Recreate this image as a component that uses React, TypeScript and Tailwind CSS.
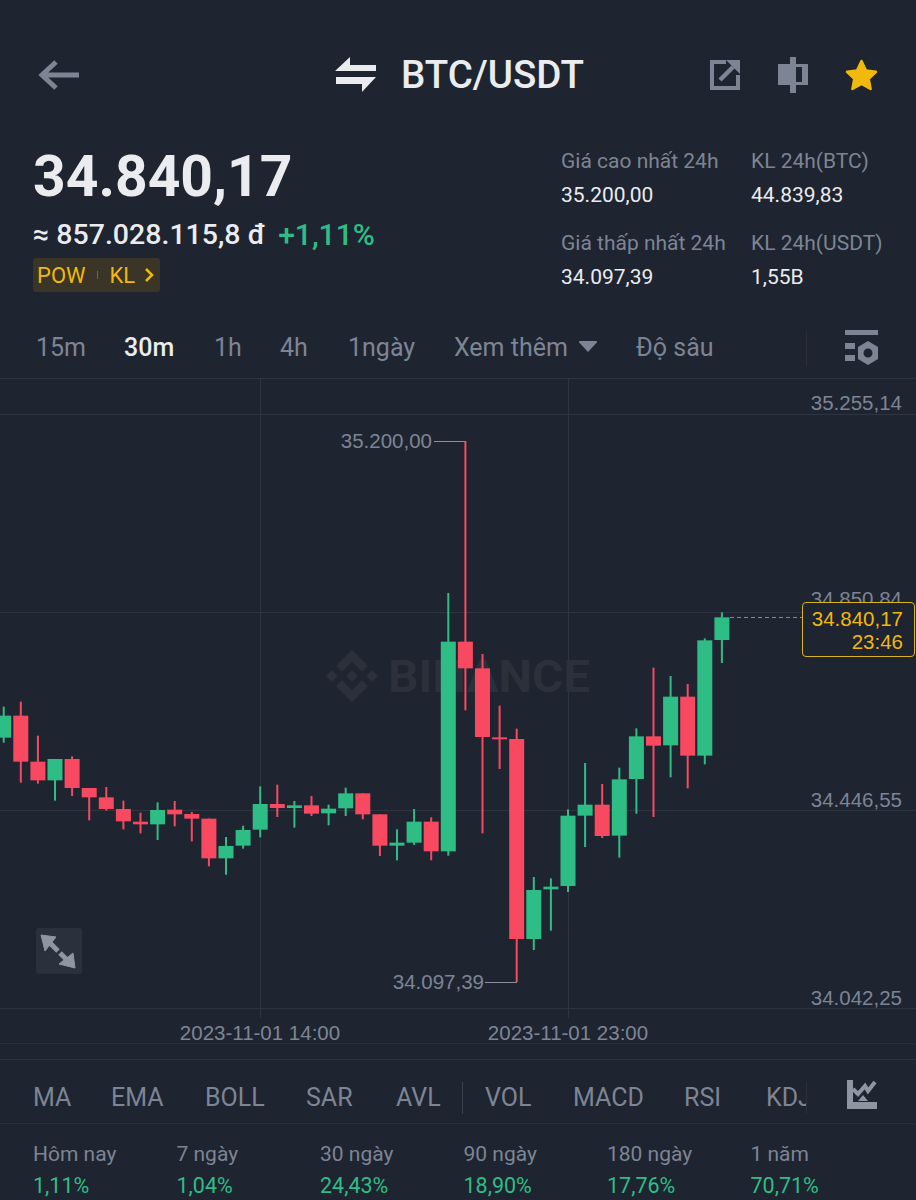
import React from "react";

const FONT = "font-['Roboto',sans-serif]";

// [up?, wickTop, bodyTop, bodyBottom, wickBottom], measured on a 3x grid from y=580
const candles: [boolean, number, number, number, number][] = [
  [true, 380, 407, 473, 488],
  [false, 365, 407, 545, 608],
  [false, 467, 545, 601, 611],
  [true, 537, 537, 601, 662],
  [false, 529, 537, 624, 648],
  [false, 624, 624, 652, 721],
  [false, 621, 652, 687, 692],
  [false, 662, 687, 724, 748],
  [false, 698, 725, 733, 760],
  [true, 667, 690, 733, 780],
  [false, 663, 689, 703, 739],
  [false, 696, 702, 716, 784],
  [false, 716, 716, 835, 859],
  [true, 771, 798, 835, 884],
  [true, 737, 750, 797, 806],
  [true, 619, 672, 749, 772],
  [false, 614, 672, 684, 711],
  [true, 663, 676, 684, 743],
  [false, 648, 676, 701, 708],
  [true, 674, 686, 700, 736],
  [true, 623, 640, 685, 708],
  [false, 640, 640, 703, 718],
  [false, 703, 703, 797, 828],
  [true, 748, 788, 797, 841],
  [true, 687, 725, 788, 795],
  [false, 712, 725, 814, 841],
  [true, 39, 185, 814, 827],
  [false, -417, 185, 265, 391],
  [false, 222, 265, 471, 760],
  [false, 377, 472, 478, 567],
  [false, 446, 477, 1077, 1206],
  [true, 891, 930, 1077, 1110],
  [true, 895, 920, 928, 1052],
  [true, 688, 707, 918, 936],
  [true, 549, 674, 707, 801],
  [false, 612, 674, 768, 774],
  [true, 563, 598, 767, 833],
  [true, 445, 469, 597, 701],
  [false, 263, 469, 497, 711],
  [true, 288, 350, 496, 592],
  [false, 312, 350, 527, 625],
  [true, 175, 181, 527, 553],
  [true, 97, 112, 180, 249],
];

// chart svg starts at y=378 on the page
const toY = (v: number) => 580 + v / 3 - 378;

const timeTabs = [
  { label: "15m", x: "w-[88px]" },
  { label: "30m", x: "w-[90px]", active: true },
  { label: "1h", x: "w-[66px]" },
  { label: "4h", x: "w-[68px]" },
  { label: "1ngày", x: "w-[106px]" },
];

const indicators = [
  { label: "MA", w: "w-[78px]" },
  { label: "EMA", w: "w-[94px]" },
  { label: "BOLL", w: "w-[101px]" },
  { label: "SAR", w: "w-[90px]" },
  { label: "AVL", w: "w-[66px]" },
];

const indicators2 = [
  { label: "VOL", w: "w-[88px]" },
  { label: "MACD", w: "w-[111px]" },
  { label: "RSI", w: "w-[82px]" },
  { label: "KDJ", w: "w-[40px]" },
];

const periods = [
  { label: "Hôm nay", value: "1,11%" },
  { label: "7 ngày", value: "1,04%" },
  { label: "30 ngày", value: "24,43%" },
  { label: "90 ngày", value: "18,90%" },
  { label: "180 ngày", value: "17,76%" },
  { label: "1 năm", value: "70,71%" },
];

function Chart() {
  const axis = "font-['Liberation_Sans',sans-serif] text-[20.5px] fill-[#7d8594]";
  return (
    <svg width="916" height="666" viewBox="0 0 916 666" className="block">
      {/* grid */}
      {[0, 36, 234, 432, 630].map((y) => (
        <line key={y} x1="0" x2="916" y1={y + 0.5} y2={y + 0.5} stroke="#2e3440" />
      ))}
      <line x1="260.5" x2="260.5" y1="0" y2="640" stroke="#2e3440" />
      <line x1="568.5" x2="568.5" y1="0" y2="640" stroke="#2e3440" />
      <line x1="0" x2="916" y1="665.5" y2="665.5" stroke="#2a2f3a" />

      {/* watermark */}
      <g transform="translate(326 272) scale(0.41)" fill="#2b303b">
        <path d="M38.73 53.2l24.59-24.58 24.6 24.6 14.3-14.31L63.32 0 24.43 38.89zM0 63.31l14.3-14.3 14.31 14.3-14.31 14.3zM38.73 73.41l24.59 24.59 24.6-24.6 14.31 14.29-38.9 38.91-38.91-38.88-.02-.02zM98 63.31l14.3-14.3 14.31 14.3-14.31 14.31zM77.83 63.3L63.32 48.78 52.59 59.51l-1.24 1.23-2.54 2.54 14.51 14.5 14.5-14.47z" />
      </g>
      <text x="388" y="314" textLength="202" lengthAdjust="spacingAndGlyphs" className="font-['Roboto',sans-serif] text-[45px] font-bold fill-[#2b303b]">
        BINANCE
      </text>

      {/* axis */}
      <text x="902" y="32" textAnchor="end" className={axis}>35.255,14</text>
      <text x="902" y="228" textAnchor="end" className={axis}>34.850,84</text>
      <text x="902" y="429" textAnchor="end" className={axis}>34.446,55</text>
      <text x="902" y="627" textAnchor="end" className={axis}>34.042,25</text>
      <text x="260" y="662" textAnchor="middle" className={axis}>2023-11-01 14:00</text>
      <text x="568" y="662" textAnchor="middle" className={axis}>2023-11-01 23:00</text>

      {/* candles */}
      {candles.map(([up, wt, bt, bb, wb], i) => {
        const cx = 3.7 + i * 17.1;
        const color = up ? "#2ebd85" : "#f84960";
        return (
          <g key={i} fill={color}>
            <rect x={cx - 1} y={toY(wt)} width="2" height={(wb - wt) / 3} />
            <rect x={cx - 7.5} y={toY(bt)} width="15" height={Math.max((bb - bt) / 3, 2)} />
          </g>
        );
      })}

      {/* high / low */}
      <text x="432" y="70" textAnchor="end" className={axis}>35.200,00</text>
      <line x1="434" x2="465" y1="63.5" y2="63.5" stroke="#8a909c" />
      <text x="484" y="611" textAnchor="end" className={axis}>34.097,39</text>
      <line x1="485" x2="517" y1="604.5" y2="604.5" stroke="#8a909c" />

      {/* last price line */}
      <line x1="730" x2="802" y1="239.5" y2="239.5" stroke="#a88a3a" strokeDasharray="4 3" />
    </svg>
  );
}

export default function App() {
  return (
    <div className={`w-[916px] h-[1200px] overflow-hidden bg-[#1e2430] ${FONT}`}>
      {/* nav */}
      <div className="flex items-center h-[50px] mt-[50px] px-[38px]">
        <div className="flex-1">
          <svg width="42" height="32" viewBox="0 0 42 32" fill="none" stroke="#7d8594" strokeWidth="5">
            <path d="M41 16H5M18 3 4 16l14 13" />
          </svg>
        </div>
        <div className="flex items-center gap-[24px] ml-[3px]">
          <svg width="42" height="36" viewBox="0 0 42 36" fill="#eaecef">
            <polygon points="0,14 15,0 15,8 41,8 41,14" />
            <polygon points="1,20 41,20 27,35 27,27 1,27" />
          </svg>
          <span className="text-[38.5px] leading-[50px] font-medium text-[#eaecef]">BTC/USDT</span>
        </div>
        <div className="flex-1 flex justify-end items-center gap-[37px]">
          <svg width="31" height="30" viewBox="0 0 31 30" fill="none" stroke="#7d8594" strokeWidth="4">
            <path d="M16 2H2v26h26V15" />
            <path d="M10 20 23 7" strokeWidth="4.5" />
            <polygon points="16,0 30,0 30,14" fill="#7d8594" stroke="none" />
          </svg>
          <svg width="30" height="36" viewBox="0 0 30 36" fill="#7d8594">
            <path d="M12 0h6v7h12v21H18v8h-6v-8H0V7h12zM18 10v15h6V10z" fillRule="evenodd" />
          </svg>
          <svg width="33" height="33" viewBox="0 0 33 33" fill="#f0b90b" stroke="#f0b90b" strokeWidth="2.5" strokeLinejoin="round">
            <polygon points="16.5,2 21,11.5 31,12.8 23.7,19.8 25.6,30 16.5,25 7.4,30 9.3,19.8 2,12.8 12,11.5" />
          </svg>
        </div>
      </div>

      {/* price + 24h stats */}
      <div className="flex h-[224px] pt-[49px]">
        <div className="w-[561px] pl-[33px]">
          <div className="text-[57px] leading-[56px] font-bold text-[#eaecef]">34.840,17</div>
          <div className="flex items-center gap-[13px] mt-[15px] h-[30px] leading-[30px] whitespace-nowrap">
            <span className="text-[28.5px] text-[#eaecef] font-medium">≈ 857.028.115,8 đ</span>
            <span className="text-[30px] text-[#2ebd85] font-medium">+1,11%</span>
          </div>
          <div className="flex items-center w-[127px] h-[34px] mt-[8px] pl-[4px] rounded-[3px] bg-[#3a3527] text-[22px] text-[#f0b90b]">
            <span>POW</span>
            <span className="w-px h-[8px] bg-[#7c6a26] ml-[11px] mr-[12px]" />
            <span>KL</span>
            <svg width="10" height="14" viewBox="0 0 10 14" fill="none" stroke="#f0b90b" strokeWidth="2.5" className="ml-[9px]">
              <path d="m2 1 6 6-6 6" />
            </svg>
          </div>
        </div>
        <div className="grid grid-cols-[190px_1fr] content-start gap-y-[24px] text-[21px] leading-[24px]">
          {[
            ["Giá cao nhất 24h", "35.200,00"],
            ["KL 24h(BTC)", "44.839,83"],
            ["Giá thấp nhất 24h", "34.097,39"],
            ["KL 24h(USDT)", "1,55B"],
          ].map(([label, value]) => (
            <div key={label}>
              <div className="text-[#7d8594] whitespace-nowrap">{label}</div>
              <div className="text-[#eaecef] mt-[10px] whitespace-nowrap">{value}</div>
            </div>
          ))}
        </div>
      </div>

      {/* time tabs */}
      <div className="flex items-center h-[46px] pt-[2px] pl-[36px] text-[25px] text-[#7d8594]">
        {timeTabs.map((t) => (
          <span key={t.label} className={`${t.x} ${t.active ? "text-[#eaecef] font-medium" : ""}`}>
            {t.label}
          </span>
        ))}
        <span className="flex items-center w-[182px]">
          Xem thêm
          <svg width="18" height="12" viewBox="0 0 18 12" fill="#7d8594" className="ml-[11px] -mt-[2px]">
            <path d="M1 0h16a1 1 0 0 1 .8 1.5L9 11 .2 1.500A1 1 0 0 1 1 0z" />
          </svg>
        </span>
        <span className="w-[170px]">Độ sâu</span>
        <div className="w-px h-[35px] bg-[#2a2f3a]" />
        <svg width="35" height="35" viewBox="0 0 35 35" fill="#7d8594" className="ml-[37px] -mt-[2px]">
          <rect x="1" y="0" width="33" height="5" />
          <rect x="1" y="13" width="10" height="6" />
          <rect x="1" y="25" width="10" height="6" />
          <path fillRule="evenodd" d="M24 11l10 6v12l-10 6-10-6V17zM24 18.500a4.500 4.500 0 1 0 0 9 4.500 4.500 0 0 0 0-9z" />
        </svg>
      </div>

      {/* chart */}
      <div className="relative mt-[8px]">
        <Chart />
        <div className="absolute left-[802px] top-[224px] w-[113px] h-[55px] pr-[11px] pt-[4px] rounded-[4px] border border-[#d9b41e] bg-[#1e2430] text-right font-['Liberation_Sans',sans-serif] text-[20.5px] leading-[23px] text-[#f0b90b]">
          <div>34.840,17</div>
          <div>23:46</div>
        </div>
        <div className="absolute left-[36px] top-[550px] w-[46px] h-[46px] rounded-[3px] bg-[#2a303c]">
          <svg width="46" height="46" viewBox="0 0 46 46" fill="#8f96a3" stroke="#8f96a3">
            <polygon points="5,7 20,9 9,23" strokeWidth="1" />
            <line x1="13" y1="14" x2="22" y2="23" strokeWidth="5" />
            <polygon points="39,40 23,36 37,25" strokeWidth="1" />
            <line x1="24" y1="25" x2="32" y2="33" strokeWidth="5" />
          </svg>
        </div>
      </div>
      <div className="h-[16px] border-b border-[#2e3440]" />

      {/* indicators */}
      <div className="flex items-center h-[64px] pt-[13px] pl-[33px] text-[25px] text-[#7d8594] border-b border-[#2a2f3a]">
        {indicators.map((t) => (
          <span key={t.label} className={t.w}>{t.label}</span>
        ))}
        <div className="w-px h-[32px] bg-[#3a404c] mr-[22px]" />
        {indicators2.map((t) => (
          <span key={t.label} className={`${t.w} overflow-hidden`}>{t.label}</span>
        ))}
        <div className="w-px h-[32px] bg-[#2a2f3a]" />
        <svg width="30" height="30" viewBox="0 0 30 30" fill="#8f96a3" className="ml-[40px] -mt-[6px]">
          <path d="M0 0h6v22h24v7H0z" />
          <path d="M6 9 11 14 18 6 21 11 28 2" fill="none" stroke="#8f96a3" strokeWidth="4" />
          <polygon points="16,15 21,21 11,21" />
        </svg>
      </div>

      {/* performance */}
      <div className="grid grid-cols-6 w-[894px] pl-[33px] pt-[17px] text-[21.5px] leading-[26px]">
        {periods.map((p) => (
          <div key={p.label} className="whitespace-nowrap">
            <div className="text-[#7d8594] text-[21px]">{p.label}</div>
            <div className="text-[#2ebd85] mt-[6px]">{p.value}</div>
          </div>
        ))}
      </div>
    </div>
  );
}
